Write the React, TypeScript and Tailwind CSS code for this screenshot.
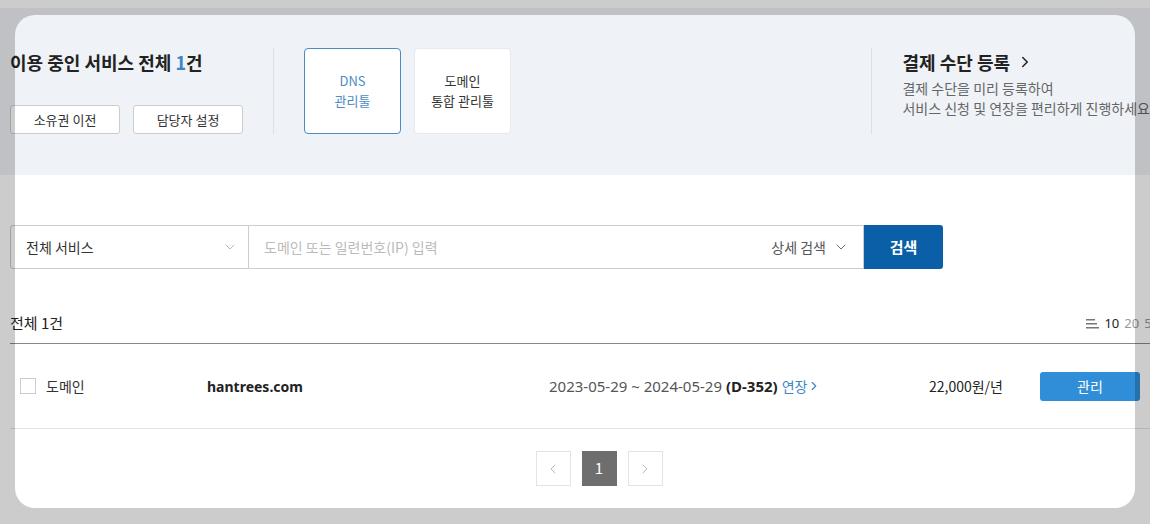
import { ChevronDown, ChevronLeft, ChevronRight } from 'lucide-react'

const FONT = { fontFamily: '"Noto Sans CJK KR", "Noto Sans", sans-serif' }
const LATIN = { fontFamily: '"Noto Sans", "Noto Sans CJK KR", sans-serif' }

function ToolBox({ lines, active }: { lines: string[]; active?: boolean }) {
  return (
    <div
      className={
        'w-[97px] h-[86px] rounded-[4px] flex flex-col items-center justify-center text-[13px] leading-[20px] ' +
        (active ? 'bg-white border border-[#4a8cc4] text-[#4a8cc4]' : 'bg-white border border-[#e6e9ee] text-[#333]')
      }
    >
      {lines.map((l) => (
        <span key={l}>{l}</span>
      ))}
    </div>
  )
}

export default function App() {
  return (
    <div className="relative w-[1150px] h-[524px] overflow-hidden bg-white" style={FONT}>
      <div className="h-[8px]" />

      {/* Top summary band */}
      <div className="h-[167px] bg-[#eff2f7] flex items-start pt-[40px] pl-[10px]">
        <div className="w-[862px] flex items-start">
          <div className="w-[263px] h-[86px] flex flex-col justify-between">
            <h1 className="text-[18px] font-bold text-[#222] leading-[24px] mt-[2px] whitespace-nowrap">
              이용 중인 서비스 전체 <span className="text-[#3b86c6]">1</span>건
            </h1>
            <div className="flex gap-[13px]">
              <button className="w-[110px] h-[29px] bg-white border border-[#ccc] rounded-[3px] text-[13px] text-[#333]">
                소유권 이전
              </button>
              <button className="w-[110px] h-[29px] bg-white border border-[#ccc] rounded-[3px] text-[13px] text-[#333]">
                담당자 설정
              </button>
            </div>
          </div>
          <div className="w-px h-[86px] bg-[#dde1e7]" />
          <div className="ml-[30px] flex gap-[13px]">
            <ToolBox lines={['DNS', '관리툴']} active />
            <ToolBox lines={['도메인', '통합 관리툴']} />
          </div>
        </div>
        <div className="w-px h-[86px] bg-[#dde1e7]" />
        <div className="pl-[30px] whitespace-nowrap">
          <div className="flex items-center gap-[6px] text-[18px] font-bold text-[#222] leading-[24px] mt-[2px]">
            결제 수단 등록
            <ChevronRight size={18} strokeWidth={2} />
          </div>
          <p className="mt-[4px] text-[14px] leading-[20px] text-[#666]">
            결제 수단을 미리 등록하여
            <br />
            서비스 신청 및 연장을 편리하게 진행하세요
          </p>
        </div>
      </div>

      <div className="w-[1180px] ml-[10px]">
        {/* Search */}
        <div className="mt-[50px] flex h-[44px]">
          <div className="w-[239px] border border-[#ccc] rounded-l-[3px] flex items-center justify-between pl-[15px] pr-[10px] text-[14px] text-[#333]">
            전체 서비스
            <ChevronDown size={16} strokeWidth={1.2} className="text-[#aaa]" />
          </div>
          <div className="w-[615px] border-y border-r border-[#ccc] flex items-center justify-between pl-[15px] pr-[14px] text-[14px]">
            <span className="text-[#bbb]">도메인 또는 일련번호(IP) 입력</span>
            <span className="flex items-center gap-[7px] text-[#555]">
              상세 검색
              <ChevronDown size={16} strokeWidth={1.4} className="text-[#666]" />
            </span>
          </div>
          <button className="w-[79px] bg-[#0b5fa6] rounded-r-[3px] text-white text-[15px] font-bold">검색</button>
        </div>

        {/* List header */}
        <div className="mt-[44px] h-[31px] border-b border-[#888] flex items-start justify-between">
          <span className="text-[15px] text-[#222] leading-[20px]">전체 1건</span>
          <span className="flex items-center gap-[5px] text-[13px] leading-[20px] mr-[31px]" style={LATIN}>
            <svg width="13" height="11" viewBox="0 0 13 11" className="text-[#777]">
              <rect x="0" y="1" width="9" height="1.5" fill="currentColor" />
              <rect x="0" y="5" width="11" height="1.5" fill="currentColor" />
              <rect x="0" y="9" width="13" height="1.5" fill="currentColor" />
            </svg>
            <span className="text-[#222]">10</span>
            <span className="text-[#999]">20</span>
            <span className="text-[#999]">50</span>
          </span>
        </div>

        {/* Row */}
        <div className="h-[85px] border-b border-[#e3e3e3] flex items-center text-[14px]">
          <span className="ml-[10px] w-[16px] h-[16px] border border-[#ccc] bg-white" />
          <span className="ml-[10px] w-[161px] text-[#333]">도메인</span>
          <span className="w-[342px] font-bold text-[#222]" style={LATIN}>
            hantrees.com
          </span>
          <span className="w-[380px] flex items-center text-[15px] text-[#555] whitespace-nowrap">
            <span style={LATIN}>2023-05-29 ~ 2024-05-29</span>
            <span className="ml-[4px] font-bold text-[#222]" style={LATIN}>
              (D-352)
            </span>
            <span className="ml-[4px] flex items-center text-[14px] text-[#3b86c6]">
              연장
              <ChevronRight size={14} strokeWidth={2} />
            </span>
          </span>
          <span className="w-[111px] text-[14px] text-[#222]">22,000원/년</span>
          <button className="w-[100px] h-[29px] bg-[#2f8ed7] rounded-[3px] text-white text-[14px]">관리</button>
        </div>

        {/* Pagination */}
        <div className="mt-[22px] flex justify-center gap-[11px] pr-[2px]">
          <button className="w-[35px] h-[35px] border border-[#e3e3e3] flex items-center justify-center text-[#bbb]">
            <ChevronLeft size={16} strokeWidth={1.5} />
          </button>
          <button className="w-[35px] h-[35px] bg-[#6e6e6e] text-white text-[15px]">1</button>
          <button className="w-[35px] h-[35px] border border-[#e3e3e3] flex items-center justify-center text-[#bbb]">
            <ChevronRight size={16} strokeWidth={1.5} />
          </button>
        </div>
      </div>

      {/* Spotlight overlay */}
      <div className="pointer-events-none absolute left-[15px] top-[15px] w-[1120px] h-[493px] rounded-[20px] shadow-[0_0_0_2000px_rgba(0,0,0,0.2)]" />
    </div>
  )
}
